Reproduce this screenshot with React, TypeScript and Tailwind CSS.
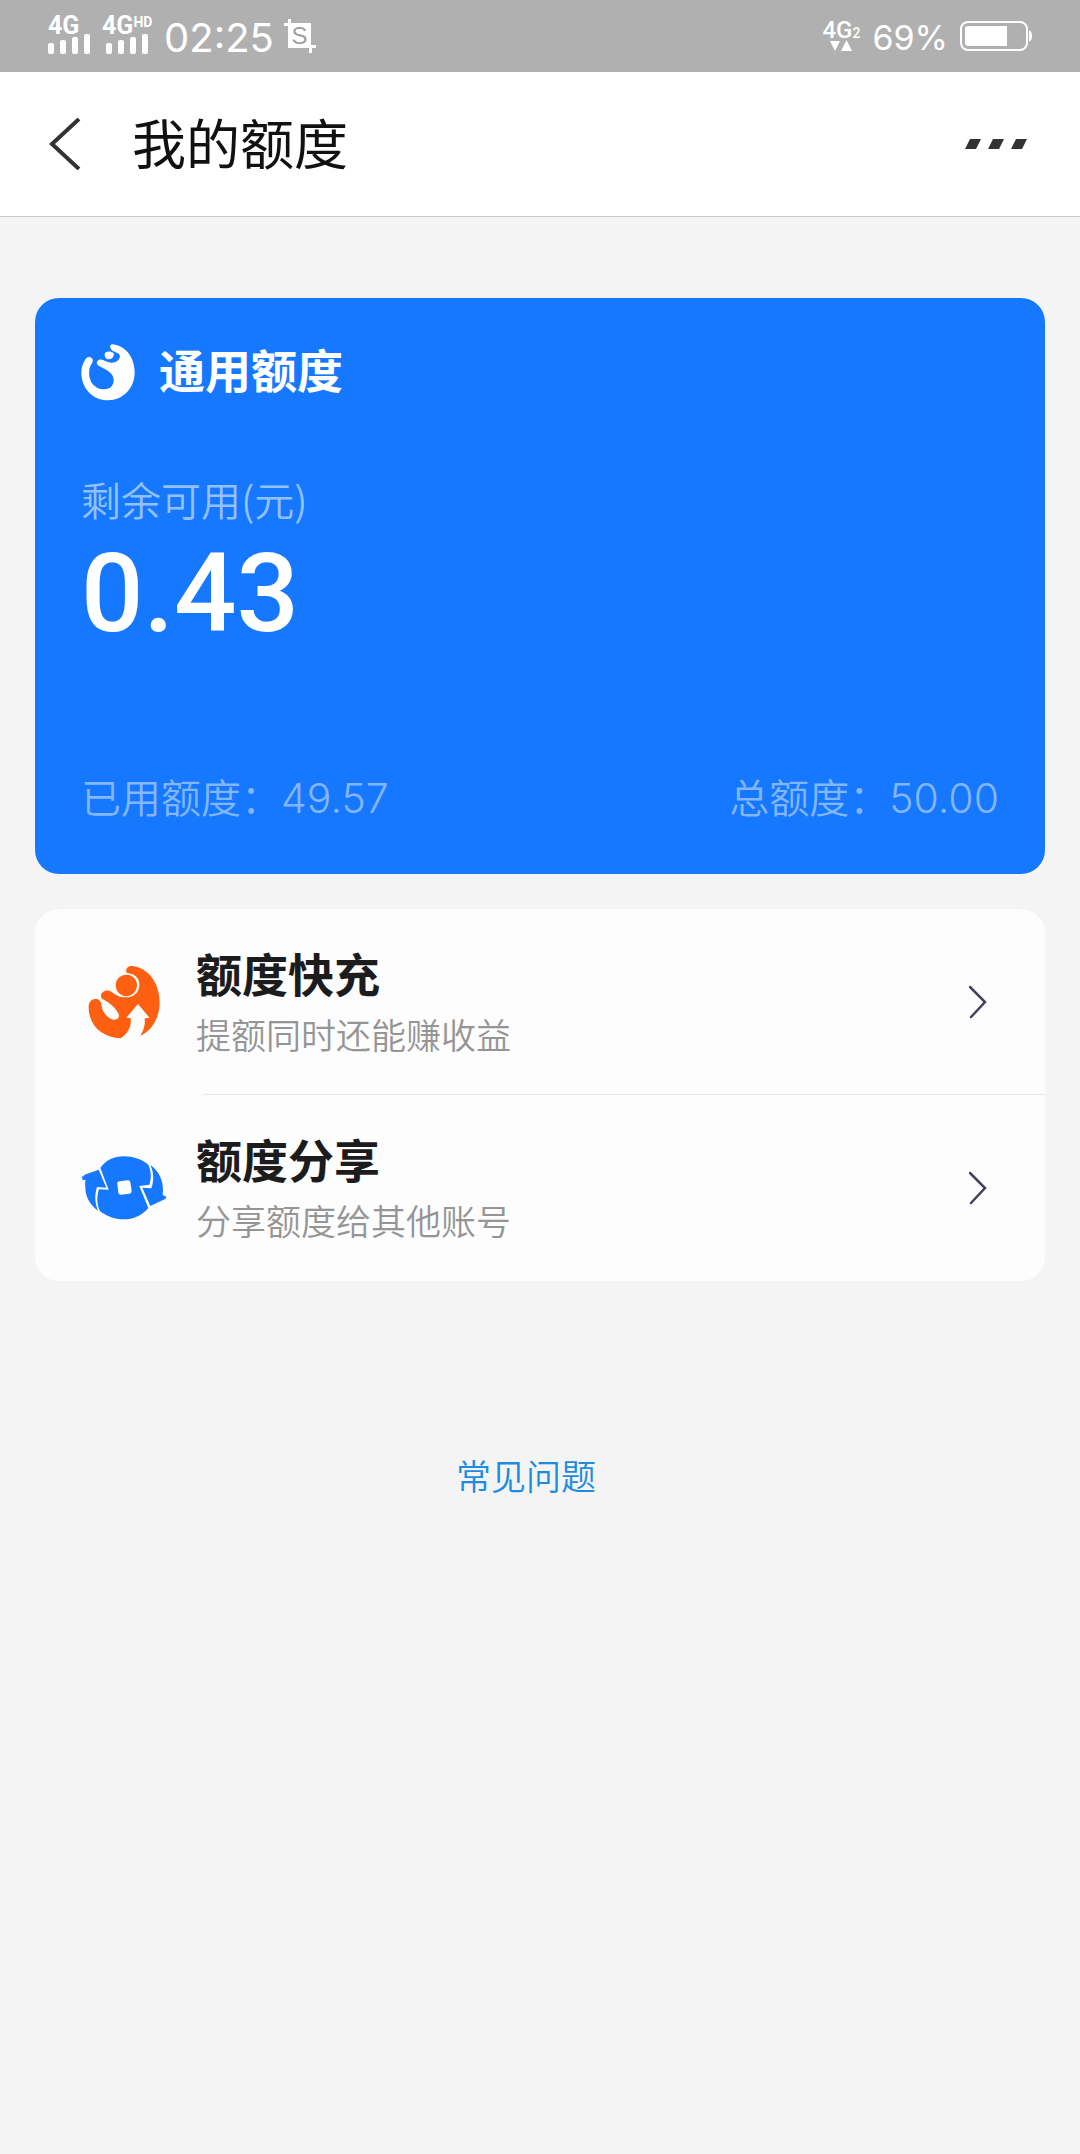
import type { ReactNode } from "react";

type MenuItem = {
  title: string;
  desc: string;
  href: string;
  icon: ReactNode;
};

function SignalBars() {
  return (
    <svg width="42" height="20" viewBox="0 0 42 20" fill="#fff" aria-hidden="true">
      <rect x="0" y="9" width="6" height="11" rx="2" />
      <rect x="12" y="6" width="6" height="14" rx="2" />
      <rect x="24" y="3" width="6" height="17" rx="2" />
      <rect x="36" y="0" width="6" height="20" rx="2" />
    </svg>
  );
}

function ScreenshotIcon() {
  return (
    <svg width="32" height="34" viewBox="0 0 32 34" aria-hidden="true">
      <path d="M4 0h3v4h20v22h5v3h-4v5h-3v-5H4V7H0V4h4z" fill="#fff" />
      <text x="15.500" y="25" textAnchor="middle" fontSize="24" fontFamily="Liberation Sans, sans-serif" fill="#a0a0a0">
        S
      </text>
    </svg>
  );
}

function BatteryIcon() {
  return (
    <svg width="72" height="30" viewBox="0 0 72 30" aria-hidden="true">
      <rect x="1" y="1" width="66" height="28" rx="7" fill="none" stroke="#fff" strokeWidth="2" />
      <path d="M8 5h39v20H8a3 3 0 0 1-3-3V8a3 3 0 0 1 3-3z" fill="#fff" />
      <path d="M69 9c2 1 3 3 3 6s-1 5-3 6z" fill="#fff" />
    </svg>
  );
}

function StatusBar() {
  return (
    <div className="flex h-[72px] items-center justify-between bg-[#b0b0b0] px-12 text-white">
      <div className="flex items-center">
        <div className="flex w-[42px] flex-col">
          <span className="font-['Roboto',sans-serif] text-[25px] leading-[16px] font-bold">4G</span>
          <SignalBars />
        </div>
        <div className="ml-3 flex w-[54px] flex-col">
          <span className="flex font-['Roboto',sans-serif] text-[25px] leading-[16px] font-bold">
            4G<span className="text-[14px] leading-[8px]">HD</span>
          </span>
          <span className="ml-1">
            <SignalBars />
          </span>
        </div>
        <span className="ml-2 pt-1 font-['Inter',sans-serif] text-[40px] leading-[48px]">02:25</span>
        <span className="ml-[10px]">
          <ScreenshotIcon />
        </span>
      </div>
      <div className="flex items-center">
        <div className="flex flex-col items-center">
          <span className="flex items-end font-['Roboto',sans-serif] text-[24px] leading-[20px] font-medium">
            4G<span className="text-[14px] leading-[14px]">2</span>
          </span>
          <svg width="22" height="12" viewBox="0 0 22 12" fill="#fff" aria-hidden="true">
            <path d="M0 1h10L5 11zM11 11h11L16.500 0z" />
          </svg>
        </div>
        <span className="mx-3 pt-1 font-['Inter',sans-serif] text-[34px] leading-[48px]">69%</span>
        <BatteryIcon />
      </div>
    </div>
  );
}

function NavBar() {
  return (
    <header className="flex h-[145px] items-center border-b border-[#c8c8c8] bg-white pr-[53px] pl-12">
      <button type="button" aria-label="返回">
        <svg width="34" height="52" viewBox="0 0 34 52" fill="none" aria-hidden="true">
          <path d="M31 1L4 26 31 51" stroke="#333" strokeWidth="4" />
        </svg>
      </button>
      <h1 className="ml-[50px] flex-1 pb-1 text-[54px] leading-[72px] text-[#111]">我的额度</h1>
      <button type="button" aria-label="更多">
        <svg width="62" height="12" viewBox="0 0 62 12" fill="#333" aria-hidden="true">
          <path d="M5 1h11l-5 10H0zM28 1h11l-5 10H23zM51 1h11l-5 10H46z" />
        </svg>
      </button>
    </header>
  );
}

function QuotaLogo() {
  return (
    <svg width="54" height="57" viewBox="20 11 162 171" fill="#fff" aria-hidden="true">
      <path d="M115 12C155 17 181 52 181 96C181 144 146 180 101 180C56 180 21 144 21 97C21 81 26 67 34 56C39 49 47 49 52 53C57 58 56 64 52 70C44 81 43 98 46 112C51 134 69 147 91 147C108 147 118 135 118 120C118 104 107 96 97 89C87 83 80 80 73 76C66 71 66 65 70 61C74 57 81 57 87 60L103 66C114 69 125 66 132 59C139 52 138 43 131 39C124 35 114 32 111 28C105 20 107 12 115 12Z" />
      <path d="M91 40C96 31 110 32 118 39C120 48 113 57 104 57C96 57 90 50 91 40Z" />
    </svg>
  );
}

function ChargeIcon() {
  return (
    <svg width="72" height="74" viewBox="82 106 216 222" fill="#ff5f10" aria-hidden="true">
      <path d="M211 108C262 112 297 159 297 218C297 260 277 302 239 318C250 301 254 284 252 266L267 265L232 223L197 264L210 266C213 289 203 311 180 326C126 324 84 289 84 232C84 216 94 208 105 208C117 208 121 216 122 224C124 245 138 265 160 271C173 268 177 263 174 254C168 238 147 219 127 209C119 204 119 193 126 188C135 181 144 181 153 187C165 196 176 203 193 203C220 204 236 187 236 165C236 145 222 132 199 130C192 121 199 110 211 108Z" />
      <circle cx="197" cy="167" r="32" />
    </svg>
  );
}

function ShareIcon() {
  return (
    <svg width="86" height="64" viewBox="62 142 258 192" fill="#1677ff" aria-hidden="true">
      <path
        fillRule="evenodd"
        d="M120 178C138 153 162 143 190 143C219 143 244 152 264 168C273 189 274 208 267 228L237 232L264 298C244 321 220 332 190 332C162 332 137 322 118 306C109 285 109 264 116 242L145 243ZM178 218Q170 219 171 226L174 252Q175 259 183 258L207 255Q214 254 214 246L210 221Q209 214 201 215Z"
      />
      <path d="M115 183L138 237L110 235C102 259 104 284 113 306C87 287 74 262 75 232C74 226 74 220 76 213L67 215Q68 210 63 204Q72 204 73 198Z" />
      <path d="M270 169C295 187 308 213 308 244L307 258Q314 264 318 263Q318 270 313 272L270 292L246 237L273 239C282 215 280 190 270 169Z" />
    </svg>
  );
}

function ChevronRight() {
  return (
    <svg width="18" height="34" viewBox="0 0 18 34" fill="none" aria-hidden="true">
      <path d="M1 2L16 17 2 32" stroke="#44405a" strokeWidth="2.500" strokeLinecap="round" />
    </svg>
  );
}

const menu: MenuItem[] = [
  { title: "额度快充", desc: "提额同时还能赚收益", href: "#charge", icon: <ChargeIcon /> },
  { title: "额度分享", desc: "分享额度给其他账号", href: "#share", icon: <ShareIcon /> },
];

function QuotaCard() {
  return (
    <section className="rounded-3xl bg-[#1677ff] px-[46px] pt-10 pb-[46px]">
      <div className="flex items-center gap-6 text-white">
        <QuotaLogo />
        <h2 className="pb-2 text-[46px] leading-[60px] font-bold">通用额度</h2>
      </div>
      <p className="mt-16 text-[40px] leading-[58px] font-[350] text-[#93c0ff]">剩余可用(元)</p>
      <p className="mt-[6px] font-['Roboto',sans-serif] text-[110px] leading-[120px] font-medium text-white">0.43</p>
      <div className="mt-28 flex justify-between text-[40px] leading-[60px] font-[350] text-[#83b6ff]">
        <p>
          已用额度：<span className="font-['Inter',sans-serif] text-[41px] font-light">49.57</span>
        </p>
        <p>
          总额度：<span className="font-['Inter',sans-serif] text-[41px] font-light">50.00</span>
        </p>
      </div>
    </section>
  );
}

function MenuList() {
  return (
    <nav className="mt-[35px] rounded-3xl bg-[#fdfdfd]">
      {menu.map((item, i) => (
        <div key={item.href}>
          {i > 0 && <div className="-mt-px ml-[168px] h-px bg-[#e8e8e8]" />}
          <a href={item.href} className="flex h-[186px] items-center pr-[58px]">
            <span className="ml-[46px] flex w-[86px] justify-center">{item.icon}</span>
            <span className="ml-[29px] flex flex-1 flex-col">
              <span className="text-[46px] leading-[64px] font-bold text-[#1c1c1c]">{item.title}</span>
              <span className="text-[35px] leading-[60px] font-[350] text-[#959595]">{item.desc}</span>
            </span>
            <ChevronRight />
          </a>
        </div>
      ))}
    </nav>
  );
}

export default function App() {
  return (
    <div className="min-h-screen bg-[#f4f4f4] font-['Noto_Sans_CJK_SC',sans-serif]">
      <StatusBar />
      <NavBar />
      <main className="px-[35px] pt-[81px]">
        <QuotaCard />
        <MenuList />
        <div className="mt-[166px] flex justify-center pr-7">
          <a href="#faq" className="text-[35px] leading-[56px] font-[350] text-[#1d8ce0]">
            常见问题
          </a>
        </div>
      </main>
    </div>
  );
}
